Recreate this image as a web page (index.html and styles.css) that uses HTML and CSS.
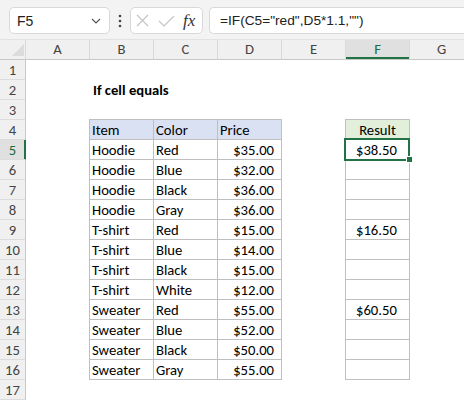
FILE: index.html
```html
<!DOCTYPE html>
<html>
<head>
<meta charset="utf-8">
<link rel="stylesheet" href="styles.css">
</head>
<body>
<div class="toolbar">
  <div class="namebox">
    <span>F5</span>
    <svg class="chev" width="10" height="6" viewBox="0 0 10 6"><path d="M1 1 L5 5 L9 1" fill="none" stroke="#555" stroke-width="1.2"/></svg>
  </div>
  <svg class="dots" width="4" height="14" viewBox="0 0 4 14"><circle cx="2" cy="2" r="1.3" fill="#444"/><circle cx="2" cy="7" r="1.3" fill="#444"/><circle cx="2" cy="12" r="1.3" fill="#444"/></svg>
  <div class="fxbtns">
    <svg width="13" height="13" viewBox="0 0 13 13"><path d="M1 1 L12 12 M12 1 L1 12" stroke="#c4c4c4" stroke-width="1.1" fill="none"/></svg>
    <svg width="17" height="12" viewBox="0 0 17 12"><path d="M1 6 L6 11 L16 1" stroke="#c4c4c4" stroke-width="1.1" fill="none"/></svg>
    <span class="fx">fx</span>
  </div>
  <div class="formula">=IF(C5="red",D5*1.1,"")</div>
</div>

<div class="sheet">
  <div class="corner"><svg width="26" height="20" viewBox="0 0 26 20"><path d="M24 4 L24 16 L12 16 Z" fill="#dcdcdc"/></svg></div>
  <div class="ch">A</div>
  <div class="ch">B</div>
  <div class="ch">C</div>
  <div class="ch">D</div>
  <div class="ch">E</div>
  <div class="ch sel">F</div>
  <div class="ch">G</div>

  <div class="rh">1</div>
  <div class="rh">2</div>
  <div class="rh">3</div>
  <div class="rh">4</div>
  <div class="rh sel">5</div>
  <div class="rh">6</div>
  <div class="rh">7</div>
  <div class="rh">8</div>
  <div class="rh">9</div>
  <div class="rh">10</div>
  <div class="rh">11</div>
  <div class="rh">12</div>
  <div class="rh">13</div>
  <div class="rh">14</div>
  <div class="rh">15</div>
  <div class="rh">16</div>
  <div class="rh">17</div>

  <div class="title">If cell equals</div>

  <div class="tbl data">
    <div class="c hd">Item</div><div class="c hd">Color</div><div class="c hd">Price</div>
    <div class="c">Hoodie</div><div class="c">Red</div><div class="c num">$35.00</div>
    <div class="c">Hoodie</div><div class="c">Blue</div><div class="c num">$32.00</div>
    <div class="c">Hoodie</div><div class="c">Black</div><div class="c num">$36.00</div>
    <div class="c">Hoodie</div><div class="c">Gray</div><div class="c num">$36.00</div>
    <div class="c">T-shirt</div><div class="c">Red</div><div class="c num">$15.00</div>
    <div class="c">T-shirt</div><div class="c">Blue</div><div class="c num">$14.00</div>
    <div class="c">T-shirt</div><div class="c">Black</div><div class="c num">$15.00</div>
    <div class="c">T-shirt</div><div class="c">White</div><div class="c num">$12.00</div>
    <div class="c">Sweater</div><div class="c">Red</div><div class="c num">$55.00</div>
    <div class="c">Sweater</div><div class="c">Blue</div><div class="c num">$52.00</div>
    <div class="c">Sweater</div><div class="c">Black</div><div class="c num">$50.00</div>
    <div class="c">Sweater</div><div class="c">Gray</div><div class="c num">$55.00</div>
  </div>

  <div class="tbl result">
    <div class="c rhd">Result</div>
    <div class="c res active">$38.50<span class="selbox"></span><span class="handle"></span></div>
    <div class="c res"></div>
    <div class="c res"></div>
    <div class="c res"></div>
    <div class="c res">$16.50</div>
    <div class="c res"></div>
    <div class="c res"></div>
    <div class="c res"></div>
    <div class="c res">$60.50</div>
    <div class="c res"></div>
    <div class="c res"></div>
    <div class="c res"></div>
  </div>
</div>
</body>
</html>
```

FILE: styles.css
```css
html, body {
  margin: 0;
  padding: 0;
}
body {
  width: 464px;
  height: 400px;
  overflow: hidden;
  background: #fff;
  font-family: "Carlito", "Lato", sans-serif;
}

/* formula bar */
.toolbar {
  height: 40px;
  box-sizing: border-box;
  background: #f3f3f3;
  border-bottom: 1px solid #e2e2e2;
  display: flex;
  align-items: flex-start;
  padding: 7px 0 0 9px;
  font-family: "Liberation Sans", Arial, sans-serif;
}
.namebox {
  width: 101px;
  height: 27px;
  box-sizing: border-box;
  background: #fff;
  border: 1px solid #d9d9d9;
  border-radius: 5px;
  display: flex;
  align-items: center;
  justify-content: space-between;
  padding: 0 8px 0 7px;
  font-size: 14px;
  color: #222;
}
.dots {
  margin: 7px 0 0 8px;
}
.fxbtns {
  margin-left: 8px;
  width: 73px;
  height: 27px;
  box-sizing: border-box;
  background: #fff;
  border: 1px solid #d9d9d9;
  border-radius: 5px;
  display: flex;
  align-items: center;
  padding: 0 0 0 5px;
  gap: 9px;
}
.fx {
  font-family: "Liberation Serif", serif;
  font-style: italic;
  font-size: 17px;
  color: #333;
  margin-left: -1px;
  line-height: 1;
}
.formula {
  margin-left: 6px;
  flex: 1;
  height: 27px;
  box-sizing: border-box;
  background: #fff;
  border: 1px solid #d9d9d9;
  border-right: none;
  border-radius: 5px 0 0 5px;
  padding-left: 10px;
  font-size: 13.7px;
  line-height: 25px;
  color: #222;
  white-space: nowrap;
}

/* sheet */
.sheet {
  display: grid;
  grid-template-columns: 26px repeat(7, 64px);
  grid-template-rows: repeat(18, 20px);
  font-size: 14.67px;
  color: #000;
}
.corner,
.ch {
  background: #f0f0f0;
  box-sizing: border-box;
  border-bottom: 1px solid #c8c8c8;
  border-right: 1px solid #d9d9d9;
}
.corner svg {
  display: block;
}
.ch {
  text-align: center;
  line-height: 19px;
  color: #444;
}
.ch.sel {
  background: #e0e0e0;
  color: #1d6a3f;
  box-shadow: inset 0 -2px 0 #217346;
}
.rh {
  grid-column: 1;
  background: #f0f0f0;
  box-sizing: border-box;
  border-right: 1px solid #c8c8c8;
  border-bottom: 1px solid #dcdcdc;
  text-align: center;
  line-height: 20px;
  color: #444;
}
.rh.sel {
  background: #e0e0e0;
  color: #1d6a3f;
  border-right-color: #217346;
  box-shadow: inset -1px 0 0 #217346;
}

.title {
  grid-column: 3 / span 3;
  grid-row: 3;
  font-weight: bold;
  padding-left: 3px;
  line-height: 21px;
}

.tbl {
  grid-row: 5 / 18;
  margin: -1px 0 0 -1px;
  display: grid;
  grid-auto-rows: 19px;
  gap: 1px;
  background: #bfbfbf;
  border: 1px solid #bfbfbf;
}
.data {
  grid-column: 3 / 6;
  grid-template-columns: repeat(3, 63px);
}
.result {
  grid-column: 7;
  grid-template-columns: 63px;
}
.c {
  background: #fff;
  line-height: 20px;
  padding: 0 2px;
  white-space: nowrap;
}
.c.hd {
  background: #d9e1f2;
}
.c.num {
  text-align: right;
  padding-right: 7px;
}
.c.rhd {
  background: #e2efda;
  text-align: center;
}
.c.res {
  padding-left: 10px;
}
.c.active {
  position: relative;
}
.selbox {
  position: absolute;
  left: -2px;
  top: -2px;
  width: 66px;
  height: 23px;
  box-sizing: border-box;
  border: 2px solid #217346;
}
.handle {
  position: absolute;
  left: 60px;
  top: 16px;
  width: 5px;
  height: 5px;
  background: #217346;
  border: 1px solid #fff;
}
```
